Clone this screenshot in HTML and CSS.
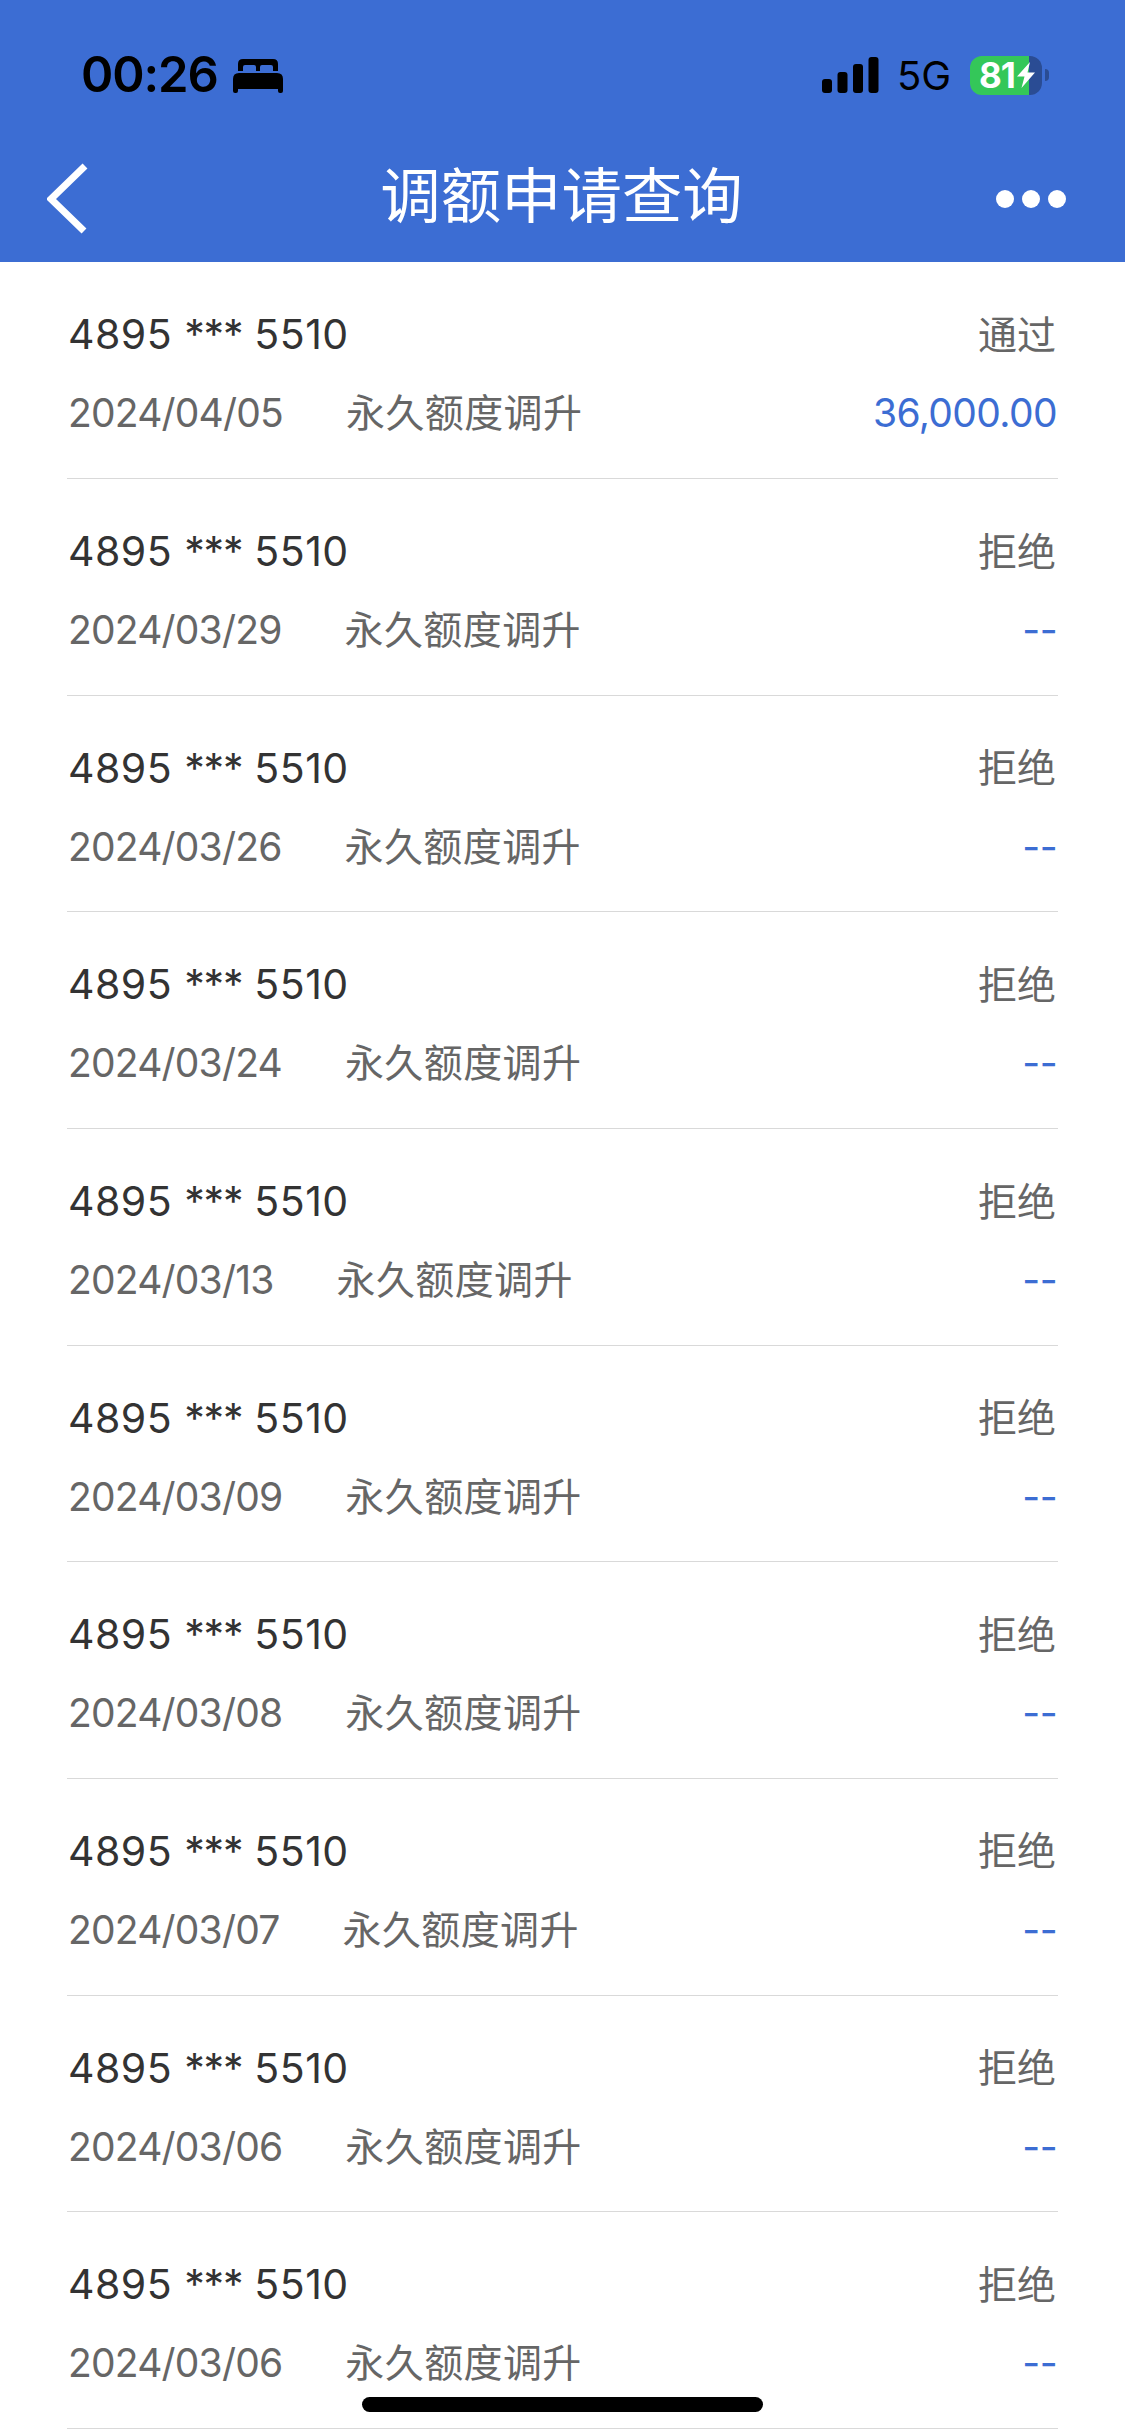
FILE: index.html
```html
<!DOCTYPE html>
<html lang="zh-CN">
<head>
  <meta charset="UTF-8">
  <title>调额申请查询</title>
  <link rel="stylesheet" href="styles.css">
</head>
<body>
  <header class="header">
    <div class="status">
      <span class="status__time">00:26</span>
      <svg class="status__bed" width="50" height="35" viewBox="0 0 50 35">
        <path d="M5 12V5Q5 0 10 0H40Q45 0 45 5V12H40V8Q40 6 38 6H29Q27 6 27 8V12H23V8Q23 6 21 6H12Q10 6 10 8V12Z"/>
        <path d="M0 20Q0 14 6 14H44Q50 14 50 20V32Q50 34 48 34H47Q45 34 45 32V30H5V32Q5 34 3 34H2Q0 34 0 32Z"/>
      </svg>
      <svg class="status__signal" width="57" height="36" viewBox="0 0 57 36">
        <rect x="0" y="22" width="10" height="14" rx="3"/>
        <rect x="15.500" y="15" width="10" height="21" rx="3"/>
        <rect x="31" y="7" width="10" height="29" rx="3"/>
        <rect x="46.500" y="0" width="10" height="36" rx="3"/>
      </svg>
      <span class="status__network">5G</span>
      <div class="battery">
        <span class="battery__level">81</span>
        <svg class="battery__bolt" width="18" height="26" viewBox="0 0 18 26">
          <path d="M13 0L0 14.500H7.500L4.500 26L18 10.500H10.500Z"/>
        </svg>
      </div>
      <span class="battery__cap"></span>
    </div>
    <nav class="nav">
      <svg class="nav__back" width="42" height="72" viewBox="0 0 42 72">
        <path d="M38 3L4 36L37 68"/>
      </svg>
      <h1 class="nav__title">调额申请查询</h1>
      <div class="nav__more"><i></i><i></i><i></i></div>
    </nav>
  </header>

  <ul class="list">
    <li class="record">
      <div class="record__row">
        <span class="record__card">4895 <b>***</b> 5510</span>
        <span class="record__status">通过</span>
      </div>
      <div class="record__row">
        <span class="record__date">2024/04/05</span>
        <span class="record__type">永久额度调升</span>
        <span class="record__amount">36,000.00</span>
      </div>
    </li>
    <li class="record">
      <div class="record__row">
        <span class="record__card">4895 <b>***</b> 5510</span>
        <span class="record__status">拒绝</span>
      </div>
      <div class="record__row">
        <span class="record__date">2024/03/29</span>
        <span class="record__type">永久额度调升</span>
        <span class="record__amount">--</span>
      </div>
    </li>
    <li class="record">
      <div class="record__row">
        <span class="record__card">4895 <b>***</b> 5510</span>
        <span class="record__status">拒绝</span>
      </div>
      <div class="record__row">
        <span class="record__date">2024/03/26</span>
        <span class="record__type">永久额度调升</span>
        <span class="record__amount">--</span>
      </div>
    </li>
    <li class="record">
      <div class="record__row">
        <span class="record__card">4895 <b>***</b> 5510</span>
        <span class="record__status">拒绝</span>
      </div>
      <div class="record__row">
        <span class="record__date">2024/03/24</span>
        <span class="record__type">永久额度调升</span>
        <span class="record__amount">--</span>
      </div>
    </li>
    <li class="record">
      <div class="record__row">
        <span class="record__card">4895 <b>***</b> 5510</span>
        <span class="record__status">拒绝</span>
      </div>
      <div class="record__row">
        <span class="record__date">2024/03/13</span>
        <span class="record__type">永久额度调升</span>
        <span class="record__amount">--</span>
      </div>
    </li>
    <li class="record">
      <div class="record__row">
        <span class="record__card">4895 <b>***</b> 5510</span>
        <span class="record__status">拒绝</span>
      </div>
      <div class="record__row">
        <span class="record__date">2024/03/09</span>
        <span class="record__type">永久额度调升</span>
        <span class="record__amount">--</span>
      </div>
    </li>
    <li class="record">
      <div class="record__row">
        <span class="record__card">4895 <b>***</b> 5510</span>
        <span class="record__status">拒绝</span>
      </div>
      <div class="record__row">
        <span class="record__date">2024/03/08</span>
        <span class="record__type">永久额度调升</span>
        <span class="record__amount">--</span>
      </div>
    </li>
    <li class="record">
      <div class="record__row">
        <span class="record__card">4895 <b>***</b> 5510</span>
        <span class="record__status">拒绝</span>
      </div>
      <div class="record__row">
        <span class="record__date">2024/03/07</span>
        <span class="record__type">永久额度调升</span>
        <span class="record__amount">--</span>
      </div>
    </li>
    <li class="record">
      <div class="record__row">
        <span class="record__card">4895 <b>***</b> 5510</span>
        <span class="record__status">拒绝</span>
      </div>
      <div class="record__row">
        <span class="record__date">2024/03/06</span>
        <span class="record__type">永久额度调升</span>
        <span class="record__amount">--</span>
      </div>
    </li>
    <li class="record">
      <div class="record__row">
        <span class="record__card">4895 <b>***</b> 5510</span>
        <span class="record__status">拒绝</span>
      </div>
      <div class="record__row">
        <span class="record__date">2024/03/06</span>
        <span class="record__type">永久额度调升</span>
        <span class="record__amount">--</span>
      </div>
    </li>
  </ul>

  <div class="home-bar"></div>
</body>
</html>
```
FILE: styles.css
```css
html {
  box-sizing: border-box;
  background: #fff;
}

*, *:before, *:after {
  box-sizing: inherit;
}

body {
  margin: 0;
  height: 2435px;
  overflow: hidden;
  position: relative;
  font-family: Inter, 'Noto Sans CJK SC', sans-serif;
}

.header {
  height: 262.4px;
  background: #3c6dd3;
}

/* Status bar */
.status {
  display: flex;
  align-items: center;
  height: 136px;
  padding: 14px 76px 0 81px;
}

.status__time {
  width: 152px;
  font-size: 49px;
  font-weight: 600;
  line-height: 60px;
  letter-spacing: -1.1px;
}

.status__bed {
  margin-top: 2px;
}

.status__signal {
  margin-left: auto;
}

.status__network {
  width: 91px;
  padding: 2px 0 0 18px;
  font-size: 40px;
  line-height: 48px;
}

.battery {
  display: flex;
  align-items: center;
  width: 72px;
  height: 39px;
  padding-left: 9px;
  border-radius: 12px;
  background: linear-gradient(to right, #34c759 59px, #2a4c94 59px);
}

.battery__level {
  width: 38px;
  color: #fff;
  font-size: 35px;
  font-weight: 700;
  line-height: 39px;
  letter-spacing: -1px;
}

.battery__bolt {
  fill: #fff;
}

.battery__cap {
  width: 4px;
  height: 12px;
  margin-left: 3px;
  border-radius: 0 4px 4px 0;
  background: #2a4c94;
}

/* Title bar */
.nav {
  display: flex;
  align-items: center;
  justify-content: space-between;
  height: 126px;
  padding: 0 59px 0 47px;
}

.nav__back {
  fill: none;
  stroke: #fff;
  stroke-width: 7px;
}

.nav__title {
  margin: 0;
  padding: 0 0 6px 38px;
  color: #fff;
  font-size: 60.4px;
  font-weight: 400;
  line-height: 90px;
}

.nav__more {
  display: flex;
  gap: 8px;
}

.nav__more i {
  width: 18px;
  height: 18px;
  border-radius: 50%;
  background: #fff;
}

/* Records */
.list {
  margin: 0;
  padding: 0 67px;
  list-style: none;
}

.record {
  height: 216.67px;
  padding: 43px 1px 0;
  border-bottom: 1px solid #d9d9d9;
}

.record__row {
  display: flex;
  align-items: center;
  height: 58px;
  margin-bottom: 21px;
  color: #666;
  font-size: 39px;
  line-height: 58px;
  white-space: nowrap;
}

.record__card {
  color: #333;
  font-size: 41px;
  letter-spacing: 0.5px;
}

.record__card b {
  font-weight: 400;
  letter-spacing: -1.2px;
}

.record__status {
  margin-left: auto;
  padding: 1px 1px 0 0;
}

.record__date {
  margin-right: 63px;
  letter-spacing: -0.8px;
}

.record__type {
  letter-spacing: 0.4px;
}

.record__amount {
  margin-left: auto;
  color: #3c6dd3;
  letter-spacing: -0.6px;
}

.home-bar {
  position: absolute;
  left: 362px;
  bottom: 23px;
  width: 401px;
  height: 15px;
  border-radius: 8px;
  background: #000;
}
```
